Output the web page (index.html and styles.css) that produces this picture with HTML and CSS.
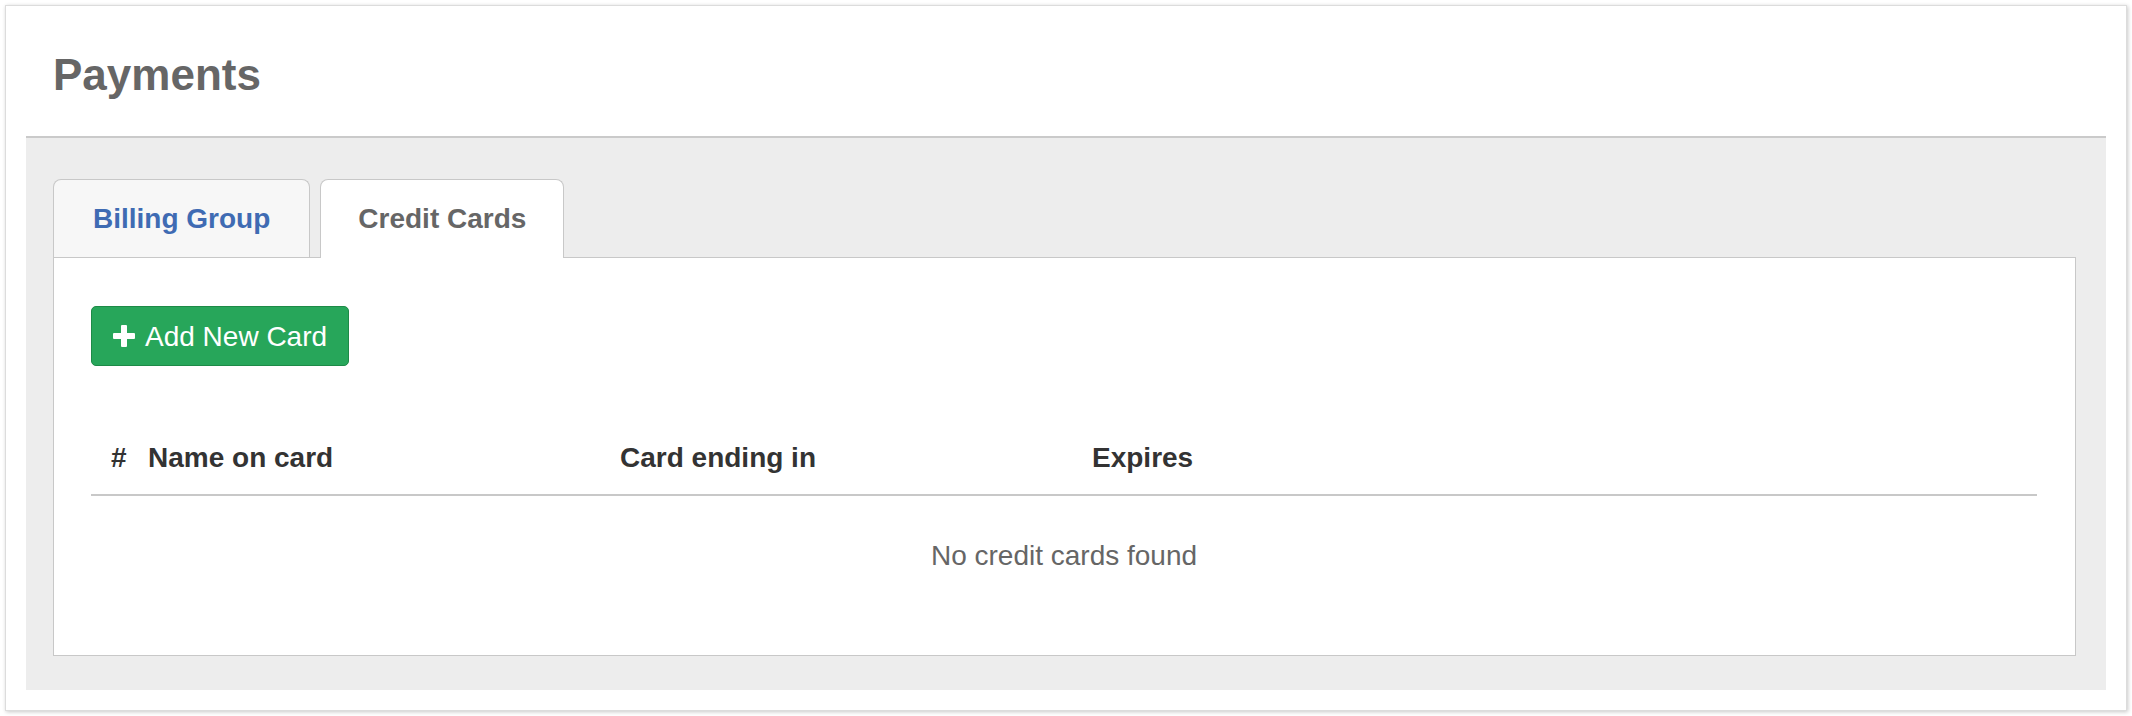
FILE: index.html
```html
<!DOCTYPE html>
<html>
<head>
<meta charset="utf-8">
<link rel="stylesheet" href="styles.css">
</head>
<body>
<div class="card">
  <h1 class="title">Payments</h1>
  <div class="section">
    <div class="tabs">
      <div class="tab">Billing Group</div>
      <div class="tab active">Credit Cards</div>
    </div>
    <div class="panel">
      <button class="btn-add"><svg class="plus" width="22" height="22" viewBox="0 0 22 22"><rect x="8" y="0" width="6" height="22" rx="1" fill="#fff"/><rect x="0" y="8" width="22" height="6" rx="1" fill="#fff"/></svg><span>Add New Card</span></button>
      <div class="table">
        <div class="row head">
          <div class="cell num">#</div>
          <div class="cell">Name on card</div>
          <div class="cell">Card ending in</div>
          <div class="cell">Expires</div>
        </div>
        <div class="empty">No credit cards found</div>
      </div>
    </div>
  </div>
</div>
</body>
</html>
```
FILE: styles.css
```css
html, body {
  margin: 0;
  padding: 0;
  background: #fff;
}
body {
  font-family: "Liberation Sans", Arial, sans-serif;
  padding: 5px;
}
.card {
  box-sizing: border-box;
  height: 706px;
  border: 1px solid #dcdcdc;
  background: #fff;
  box-shadow: 1px 1px 4px rgba(0, 0, 0, 0.22);
  padding: 47px 20px 20px 20px;
  display: flex;
  flex-direction: column;
}
.title {
  margin: 0 0 39px 27px;
  font-size: 44px;
  line-height: 44px;
  font-weight: bold;
  color: #666;
}
.section {
  flex: 1;
  background: #ededed;
  border-top: 2px solid #cacaca;
  padding: 41px 30px 34px 27px;
  display: flex;
  flex-direction: column;
}
.tabs {
  display: flex;
  gap: 10px;
  align-items: flex-end;
  position: relative;
  z-index: 1;
}
.tab {
  box-sizing: border-box;
  height: 78px;
  padding: 1px 39px 0;
  border: 1px solid #c8c8c8;
  border-bottom: none;
  border-radius: 8px 8px 0 0;
  background: #f7f7f7;
  display: flex;
  align-items: center;
  font-size: 28px;
  font-weight: bold;
  color: #3f6bb3;
}
.tab.active {
  background: #fff;
  color: #666;
  height: 79px;
  padding: 0 37px;
  margin-bottom: -1px;
}
.panel {
  flex: 1;
  background: #fff;
  border: 1px solid #c8c8c8;
  padding: 48px 38px 39px 37px;
}
.btn-add {
  display: flex;
  align-items: center;
  gap: 10px;
  height: 60px;
  padding: 2px 21px 0;
  background: #27a65a;
  border: 1px solid #1d8a47;
  border-radius: 5px;
  color: #fff;
  font-family: "Liberation Sans", Arial, sans-serif;
  font-size: 28px;
  line-height: 1;
}
.plus {
  display: block;
  margin-top: -2px;
}
.table {
  margin-top: 54px;
}
.row {
  display: grid;
  grid-template-columns: 47px 472px 472px 1fr;
  height: 76px;
  padding-top: 2px;
  box-sizing: border-box;
  align-items: center;
  border-bottom: 2px solid #c8c8c8;
}
.cell {
  padding-left: 10px;
  font-size: 28px;
  font-weight: bold;
  color: #333;
}
.cell.num {
  padding-left: 20px;
}
.empty {
  height: 118px;
  padding-top: 2px;
  box-sizing: border-box;
  display: flex;
  align-items: center;
  justify-content: center;
  font-size: 28px;
  color: #666;
}
```
